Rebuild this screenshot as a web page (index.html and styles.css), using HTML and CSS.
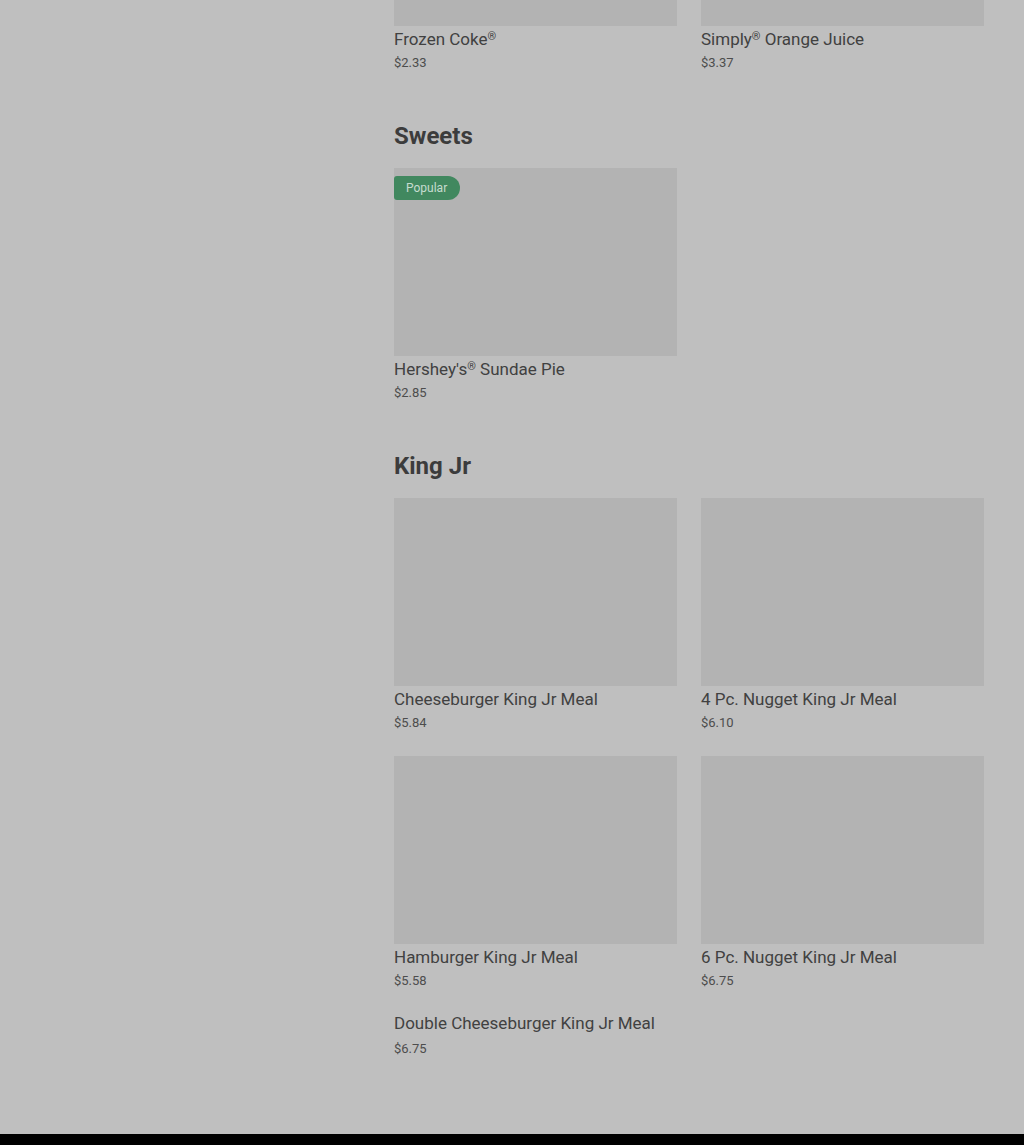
FILE: index.html
```html
<!DOCTYPE html>
<html lang="en">
<head>
    <meta charset="UTF-8">
    <meta name="viewport" content="width=device-width, initial-scale=1.0">
    <title>Menu</title>
    <link rel="stylesheet" href="styles.css">
</head>
<body>
    <div class="page">
        <aside class="sidebar"></aside>
        <main class="menu">
            <section class="category category-scrolled">
                <div class="item-grid">
                    <div class="item">
                        <div class="item-image"></div>
                        <div class="item-name">Frozen Coke<span class="reg">®</span></div>
                        <div class="item-price">$2.33</div>
                    </div>
                    <div class="item">
                        <div class="item-image"></div>
                        <div class="item-name">Simply<span class="reg">®</span> Orange Juice</div>
                        <div class="item-price">$3.37</div>
                    </div>
                </div>
            </section>

            <section class="category">
                <h2>Sweets</h2>
                <div class="item-grid">
                    <div class="item">
                        <div class="item-image">
                            <span class="badge">Popular</span>
                        </div>
                        <div class="item-name">Hershey's<span class="reg">®</span> Sundae Pie</div>
                        <div class="item-price">$2.85</div>
                    </div>
                </div>
            </section>

            <section class="category">
                <h2>King Jr</h2>
                <div class="item-grid">
                    <div class="item">
                        <div class="item-image"></div>
                        <div class="item-name">Cheeseburger King Jr Meal</div>
                        <div class="item-price">$5.84</div>
                    </div>
                    <div class="item">
                        <div class="item-image"></div>
                        <div class="item-name">4 Pc. Nugget King Jr Meal</div>
                        <div class="item-price">$6.10</div>
                    </div>
                    <div class="item">
                        <div class="item-image"></div>
                        <div class="item-name">Hamburger King Jr Meal</div>
                        <div class="item-price">$5.58</div>
                    </div>
                    <div class="item">
                        <div class="item-image"></div>
                        <div class="item-name">6 Pc. Nugget King Jr Meal</div>
                        <div class="item-price">$6.75</div>
                    </div>
                    <div class="item item-no-image">
                        <div class="item-name">Double Cheeseburger King Jr Meal</div>
                        <div class="item-price">$6.75</div>
                    </div>
                </div>
            </section>
        </main>
    </div>
    <footer></footer>
</body>
</html>
```

FILE: styles.css
```css
body {
    font-family: Roboto, "Liberation Sans", sans-serif;
    background-color: #bfbfbf;
    color: #404040;
    margin: 0;
    padding: 0;
}
.page {
    display: flex;
    padding: 0 40px 75px 0;
}
.sidebar {
    width: 394px;
    flex-shrink: 0;
}
.menu {
    flex: 1;
}
.category-scrolled {
    margin-top: -162px;
}
.category h2 {
    font-size: 24px;
    font-weight: 700;
    line-height: 32px;
    margin: 47px 0 16px;
    color: #3c3c3c;
}
.item-grid {
    display: grid;
    grid-template-columns: 1fr 1fr;
    column-gap: 24px;
    row-gap: 23px;
}
.item-image {
    position: relative;
    height: 188px;
    background-color: #b3b3b3;
    margin-bottom: 2px;
}
.item-no-image {
    margin-top: -2px;
}
.badge {
    position: absolute;
    top: 8px;
    left: 0;
    height: 24px;
    line-height: 24px;
    padding: 0 13px 0 12px;
    background-color: #41885f;
    color: #c6dccf;
    font-size: 12px;
    border-radius: 3px 12px 12px 3px;
}
.item-name {
    font-size: 17px;
    line-height: 22px;
    color: #414141;
}
.reg {
    font-size: 11px;
    vertical-align: 5px;
    line-height: 0;
}
.item-price {
    font-size: 13px;
    line-height: 20px;
    margin-top: 3px;
    color: #4d4d4d;
}
.item-no-image .item-price {
    margin-top: 5px;
}
footer {
    background-color: #000;
    height: 12px;
}
```
